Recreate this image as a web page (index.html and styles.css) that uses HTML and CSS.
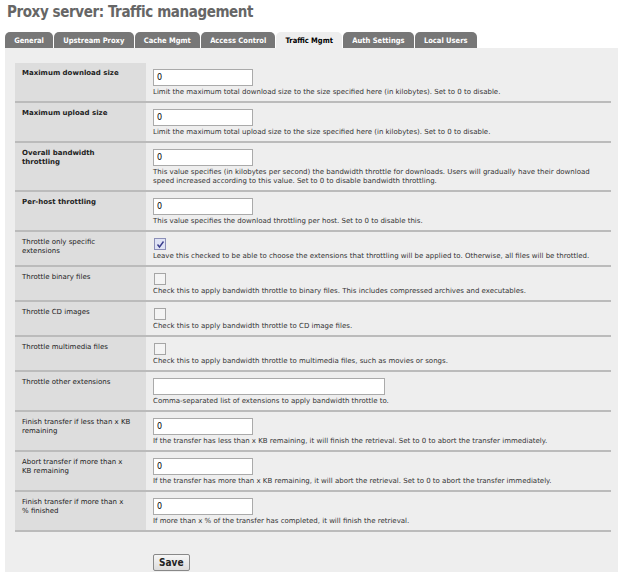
FILE: index.html
```html
<!DOCTYPE html>
<html>
<head>
<meta charset="utf-8">
<link rel="stylesheet" href="styles.css">
</head>
<body>
<h1 class="title">Proxy server: Traffic management</h1>
<ul class="tabs">
  <li class="tab">General</li>
  <li class="tab">Upstream Proxy</li>
  <li class="tab">Cache Mgmt</li>
  <li class="tab">Access Control</li>
  <li class="tab active">Traffic Mgmt</li>
  <li class="tab">Auth Settings</li>
  <li class="tab">Local Users</li>
</ul>
<div class="panel">
  <table class="form">
    <tr>
      <td class="label strong">Maximum download size</td>
      <td class="value"><input class="box" type="text" value="0"><div class="desc">Limit the maximum total download size to the size specified here (in kilobytes). Set to 0 to disable.</div></td>
    </tr>
    <tr>
      <td class="label strong">Maximum upload size</td>
      <td class="value"><input class="box" type="text" value="0"><div class="desc">Limit the maximum total upload size to the size specified here (in kilobytes). Set to 0 to disable.</div></td>
    </tr>
    <tr>
      <td class="label strong">Overall bandwidth throttling</td>
      <td class="value"><input class="box" type="text" value="0"><div class="desc">This value specifies (in kilobytes per second) the bandwidth throttle for downloads. Users will gradually have their download speed increased according to this value. Set to 0 to disable bandwidth throttling.</div></td>
    </tr>
    <tr>
      <td class="label strong">Per-host throttling</td>
      <td class="value"><input class="box" type="text" value="0"><div class="desc">This value specifies the download throttling per host. Set to 0 to disable this.</div></td>
    </tr>
    <tr>
      <td class="label">Throttle only specific extensions</td>
      <td class="value"><span class="check on"><svg viewBox="0 0 9 9" width="9" height="9"><path d="M1.5 4.5 L3.5 7 L7.5 1.5" fill="none" stroke="#3a3d8c" stroke-width="1.4"/></svg></span><div class="desc">Leave this checked to be able to choose the extensions that throttling will be applied to. Otherwise, all files will be throttled.</div></td>
    </tr>
    <tr>
      <td class="label">Throttle binary files</td>
      <td class="value"><span class="check"></span><div class="desc">Check this to apply bandwidth throttle to binary files. This includes compressed archives and executables.</div></td>
    </tr>
    <tr>
      <td class="label">Throttle CD images</td>
      <td class="value"><span class="check"></span><div class="desc">Check this to apply bandwidth throttle to CD image files.</div></td>
    </tr>
    <tr>
      <td class="label">Throttle multimedia files</td>
      <td class="value"><span class="check"></span><div class="desc">Check this to apply bandwidth throttle to multimedia files, such as movies or songs.</div></td>
    </tr>
    <tr>
      <td class="label">Throttle other extensions</td>
      <td class="value"><input class="box wide" type="text" value=""><div class="desc">Comma-separated list of extensions to apply bandwidth throttle to.</div></td>
    </tr>
    <tr>
      <td class="label">Finish transfer if less than x KB remaining</td>
      <td class="value"><input class="box" type="text" value="0"><div class="desc">If the transfer has less than x KB remaining, it will finish the retrieval. Set to 0 to abort the transfer immediately.</div></td>
    </tr>
    <tr>
      <td class="label">Abort transfer if more than x KB remaining</td>
      <td class="value"><input class="box" type="text" value="0"><div class="desc">If the transfer has more than x KB remaining, it will abort the retrieval. Set to 0 to abort the transfer immediately.</div></td>
    </tr>
    <tr>
      <td class="label">Finish transfer if more than x % finished</td>
      <td class="value"><input class="box" type="text" value="0"><div class="desc">If more than x % of the transfer has completed, it will finish the retrieval.</div></td>
    </tr>
  </table>
  <div class="actions"><button class="save" type="button">Save</button></div>
</div>
</body>
</html>
```

FILE: styles.css
```css
html, body {
  margin: 0;
  padding: 0;
  background: #ffffff;
}
body {
  font-family: "DejaVu Sans", sans-serif;
  color: #222;
  height: 572px;
  overflow: hidden;
}
.title {
  margin: 0;
  padding: 3px 0 0 7px;
  height: 26px;
  box-sizing: border-box;
  font-family: "DejaVu Sans Condensed", "DejaVu Sans", sans-serif;
  font-size: 15px;
  font-weight: bold;
  color: #666;
  letter-spacing: -0.4px;
}
.tabs {
  list-style: none;
  margin: 6px 0 0 5px;
  padding: 0;
  display: flex;
  height: 16px;
}
.tab {
  background: #777;
  color: #fff;
  font-family: "DejaVu Sans Condensed", "DejaVu Sans", sans-serif;
  font-size: 7.5px;
  font-weight: bold;
  padding: 0 9.2px;
  line-height: 17px;
  border-radius: 5px 5px 0 0;
  margin-right: 1px;
}
.tab.active {
  background: #eee;
  color: #000;
}
.panel {
  background: #eee;
  margin: 0 0 0 5px;
  padding: 15px 7px 0 10px;
  height: 530px;
  box-sizing: border-box;
}
.form {
  border-collapse: collapse;
  width: 596px;
}
.form td {
  vertical-align: top;
  border-bottom: 2px solid #bbb;
}
.label {
  width: 131px;
  box-sizing: border-box;
  background: #ddd;
  font-size: 7px;
  line-height: 9px;
  padding: 6px 14px 4px 7px;
  color: #222;
}
.label.strong {
  font-weight: bold;
}
.value {
  padding: 6px 8px 4px 7px;
  font-size: 7px;
  line-height: 9px;
}
.box {
  display: block;
  width: 100px;
  height: 17px;
  box-sizing: border-box;
  border: 1px solid #aaa;
  background: #fff;
  font-family: "DejaVu Sans", sans-serif;
  font-size: 8px;
  padding: 0 3px;
  margin: 0;
  color: #000;
}
.box.wide {
  width: 232px;
}
.check {
  display: flex;
  align-items: center;
  justify-content: center;
  width: 12px;
  height: 12px;
  box-sizing: border-box;
  border: 1px solid #a5a5a5;
  background: #f4f4f4;
  margin: 0 0 0 1px;
}
.check.on {
  background: #dfe3f5;
  border-color: #8c8fb8;
}
.desc {
  margin-top: 2px;
  color: #333;
}
.actions {
  display: flex;
  padding: 22px 0 0 138px;
}
.save {
  font-family: "DejaVu Sans Condensed", "DejaVu Sans", sans-serif;
  font-weight: bold;
  font-size: 10px;
  line-height: 13px;
  color: #222;
  height: 17px;
  padding: 0 5px;
  border: 1px solid #888;
  border-radius: 2px;
  background: linear-gradient(#f6f6f6, #dcdcdc);
}
```
